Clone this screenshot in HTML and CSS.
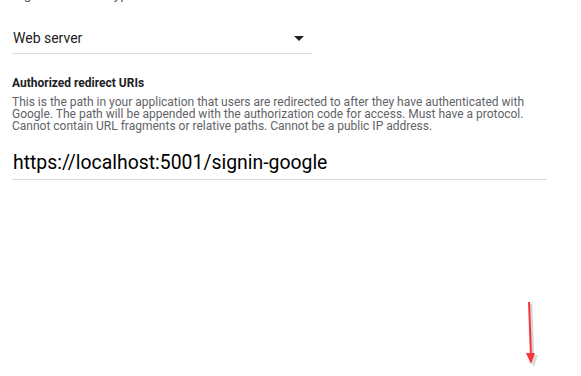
FILE: index.html
```html
<!DOCTYPE html>
<html lang="en">
<head>
    <meta charset="UTF-8">
    <meta name="viewport" content="width=device-width, initial-scale=1.0">
    <title>OAuth client - redirect URIs</title>
    <link rel="stylesheet" href="styles.css">
</head>
<body>

    <div class="form">
        <!-- label above the dropdown, scrolled mostly out of view -->
        <div class="field-label clipped">Sign-in method type</div>

        <div class="select">
            <span class="select-value">Web server</span>
            <span class="select-arrow"></span>
        </div>

        <div class="section">
            <h3>Authorized redirect URIs</h3>
            <p class="hint">This is the path in your application that users are redirected to after they have authenticated with Google. The path will be appended with the authorization code for access. Must have a protocol. Cannot contain URL fragments or relative paths. Cannot be a public IP address.</p>

            <div class="uri-input">https://localhost:5001/signin-google</div>
        </div>
    </div>

    <!-- annotation arrow -->
    <svg class="annotation" width="20" height="70" viewBox="0 0 20 70">
        <line x1="7" y1="3" x2="9" y2="58" stroke="#d4d4d4" stroke-width="2.5"/>
        <polygon points="4,54 14,54 10,66" fill="#dadada"/>
        <line x1="5" y1="1" x2="7" y2="56" stroke="#f5363c" stroke-width="2"/>
        <polygon points="2,52 11,52 7,63" fill="#f5363c"/>
    </svg>

</body>
</html>
```

FILE: styles.css
```css
body {
    font-family: Roboto, "Noto Sans", sans-serif;
    background-color: #ffffff;
    color: #202124;
    margin: 0;
    padding: 0;
}

.form {
    width: 535px;
    padding: 0 12px;
}

.field-label {
    font-size: 14px;
    line-height: 16px;
    color: #5f6368;
}

.clipped {
    margin-top: -14px;
}

.select {
    width: 300px;
    height: 34px;
    margin-top: 18px;
    padding-bottom: 7px;
    border-bottom: 1px solid #dadce0;
    display: flex;
    align-items: flex-end;
    justify-content: space-between;
    box-sizing: border-box;
}

.select-value {
    font-size: 14px;
    line-height: 16px;
    padding-left: 1px;
    color: #202124;
}

.select-arrow {
    width: 0;
    height: 0;
    border-left: 5px solid transparent;
    border-right: 5px solid transparent;
    border-top: 5px solid #202124;
    margin: 0 8px 5px 0;
}

.section {
    margin-top: 21px;
}

.section h3 {
    font-size: 12px;
    font-weight: 700;
    margin: 0;
    line-height: 16px;
    color: #202124;
}

.hint {
    max-width: 524px;
    font-size: 12px;
    line-height: 12px;
    color: #5f6368;
    margin: 5px 0 0;
}

.uri-input {
    font-size: 19.4px;
    line-height: 24px;
    color: #000000;
    padding: 0 0 4px 1px;
    margin-top: 19px;
    border-bottom: 1px solid #dadce0;
}

.annotation {
    position: absolute;
    left: 524px;
    top: 301px;
}
```
